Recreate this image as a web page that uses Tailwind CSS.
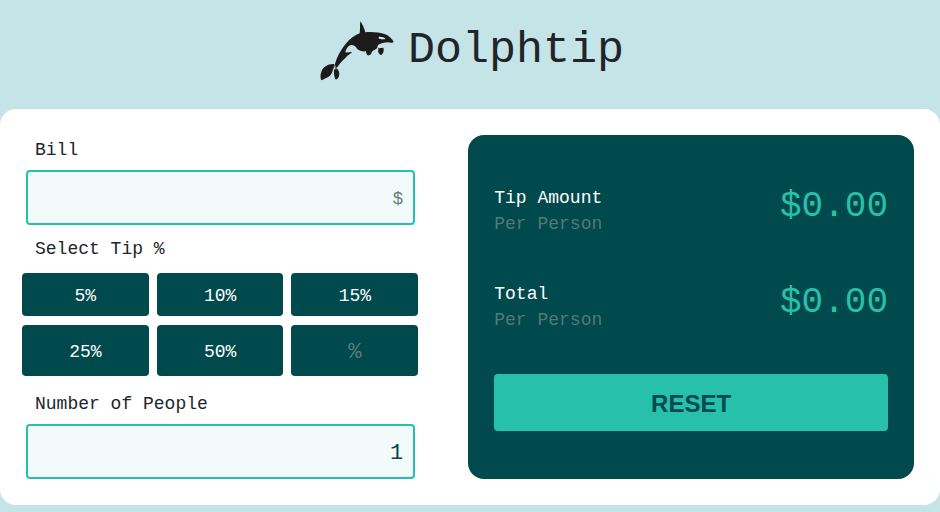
<!DOCTYPE html>
<html lang="en">
<head>
<meta charset="utf-8">
<meta name="viewport" content="width=device-width, initial-scale=1">
<title>Dolphtip</title>
<script src="https://cdn.jsdelivr.net/npm/@tailwindcss/browser@4"></script>
</head>
<body class="min-h-screen bg-[#c5e4e7] font-['Liberation_Mono',monospace] text-lg text-[#212529]">
  <header class="flex items-start justify-center gap-3 pt-[15px] pb-[22px]">
    <svg class="h-[70px] w-20" viewBox="21 15 240 210" aria-hidden="true">
      <g fill="#1c1a1c">
        <path d="M154 34C160 42 166 55 169 67C188 65 211 67 229 73C241 78 250 88 254 95C252 99 245 98 238 97C226 97 216 100 207 105C207 111 204 116 198 119C193 121 190 122 188 127C187 134 182 137 176 136C171 133 172 127 171 124C160 125 150 122 145 117C140 109 134 104 126 105C116 108 111 117 109 127C115 129 122 125 129 126C127 130 119 133 114 139C106 147 95 157 86 170L80 175L77 166C82 145 94 121 108 104C121 87 137 75 152 70C154 58 152 45 154 34Z"/>
        <path d="M75 162C57 161 42 171 37 185C33 195 34 204 37 211C44 207 55 203 63 197C71 190 72 177 77 169Z"/>
        <path d="M80 173C89 178 93 188 90 198C88 205 83 210 79 208C76 201 74 190 75 181Z"/>
        <path d="M208 113L223 113C226 124 222 132 216 135C210 133 206 127 208 120Z"/>
      </g>
      <path d="M209 81C214 79 225 82 230 87C223 89 212 88 209 85ZM204 107L210 115L222 113L214 111Z" fill="#dceaec"/>
      <path d="M71 184C72 177 76 171 81 167M75 168L81 179" fill="none" stroke="#a8bdc0" stroke-width="2"/>
    </svg>
    <h1 class="text-[45px] leading-[72px]">Dolphtip</h1>
  </header>

  <main class="grid grid-cols-1 gap-[50px] rounded-2xl bg-white py-[26px] pr-[26px] pl-[22px] md:grid-cols-[8fr_9fr]">
    <form class="flex flex-col">
      <label for="bill" class="ml-[13px] leading-[30px]">Bill</label>
      <input id="bill" type="text" inputmode="decimal" placeholder="$" class="mr-[3px] ml-1 mt-[5px] h-[55px] min-w-0 rounded border-2 border-[#26c0ab] bg-[#f3fafa] px-2.5 pt-0.5 text-right text-lg text-[#00494d] placeholder:text-[#63827e]">

      <fieldset class="mt-[9px] min-w-0">
        <legend class="ml-[13px] leading-[30px]">Select Tip %</legend>
        <div class="mt-[9px] grid grid-cols-3 gap-x-2 gap-y-[9px] text-white">
          <button type="button" class="h-[43px] rounded bg-[#00494d] pt-0.5">5%</button>
          <button type="button" class="h-[43px] rounded bg-[#00494d] pt-0.5">10%</button>
          <button type="button" class="h-[43px] rounded bg-[#00494d] pt-0.5">15%</button>
          <button type="button" class="h-[51px] rounded bg-[#00494d] pt-0.5">25%</button>
          <button type="button" class="h-[51px] rounded bg-[#00494d] pt-0.5">50%</button>
          <input type="text" inputmode="decimal" aria-label="Custom tip percent" placeholder="%" class="h-[51px] min-w-0 rounded bg-[#00494d] pt-1 text-center text-[22px] text-white placeholder:text-[#5e7a7d]">
        </div>
      </fieldset>

      <label for="people" class="mt-[13px] ml-[13px] leading-[30px]">Number of People</label>
      <input id="people" type="text" inputmode="numeric" value="1" class="mr-[3px] ml-1 mt-[5px] h-[55px] min-w-0 rounded border-2 border-[#26c0ab] bg-[#f3fafa] px-2.5 pt-1 text-right text-[22px] text-[#00494d]">
    </form>

    <section class="flex flex-col rounded-2xl bg-[#00494d] px-[26px] pt-[50px] pb-12">
      <div class="flex flex-col gap-11">
        <div class="flex items-start justify-between leading-[26px]">
          <div>
            <h2 class="text-white">Tip Amount</h2>
            <p class="text-[#547878]">Per Person</p>
          </div>
          <output class="text-4xl leading-[44px] text-[#26c0ab]">$0.00</output>
        </div>
        <div class="flex items-start justify-between leading-[26px]">
          <div>
            <h2 class="text-white">Total</h2>
            <p class="text-[#547878]">Per Person</p>
          </div>
          <output class="text-4xl leading-[44px] text-[#26c0ab]">$0.00</output>
        </div>
      </div>
      <button type="button" class="mt-[41px] h-[57px] rounded bg-[#26c0ab] pt-0.5 font-['Liberation_Sans',sans-serif] text-2xl font-bold text-[#00494d]">RESET</button>
    </section>
  </main>
</body>
</html>
